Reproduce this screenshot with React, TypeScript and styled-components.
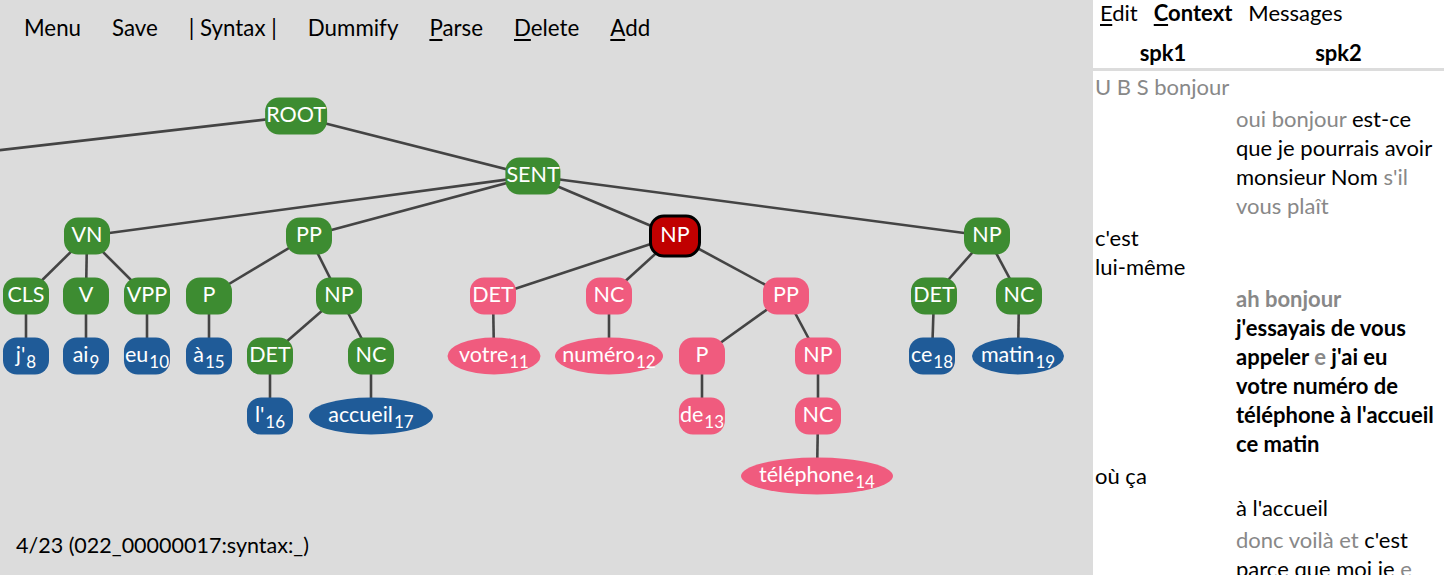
import React from "react";
import styled, { createGlobalStyle, css } from "styled-components";

const Global = createGlobalStyle`
  html, body { margin: 0; padding: 0; height: 100%; overflow: hidden; }
  body { font-family: Lato, "Open Sans", sans-serif; }
  #root { height: 100%; }
`;

const Page = styled.div`
  display: flex;
  width: 1444px;
  height: 575px;
  overflow: hidden;
`;

const Main = styled.div`
  width: 1093px;
  flex: none;
  display: flex;
  flex-direction: column;
  background: #dcdcdc;
  color: #000;
`;

const Toolbar = styled.div`
  height: 54px;
  padding: 0 0 2px 8.5px;
  display: flex;
  align-items: center;
  font-size: 22.3px;
  flex: none;
`;

const ToolItem = styled.span`
  padding: 0 15.5px;
  cursor: pointer;
  u { text-decoration: underline; text-underline-offset: 3px; }
`;

const Canvas = styled.div`
  position: relative;
  flex: 1;
  overflow: hidden;
`;

const Edges = styled.svg`
  position: absolute;
  left: 0;
  top: 0;
  width: 100%;
  height: 100%;
`;

type Kind = "green" | "blue" | "pink" | "red";

const colors: Record<Kind, string> = {
  green: "#3d8c31",
  blue: "#1f5b98",
  pink: "#f05b7e",
  red: "#c00000",
};

const NodeBox = styled.div<{ $kind: Kind; $w?: number }>`
  position: absolute;
  transform: translate(-50%, -50%);
  height: 37px;
  min-width: 46px;
  box-sizing: border-box;
  padding: 0 1px;
  display: flex;
  align-items: center;
  justify-content: center;
  white-space: nowrap;
  background: ${(p) => colors[p.$kind]};
  color: #fff;
  font-size: 21.5px;
  line-height: 1;
  border-radius: 14px;
  ${(p) =>
    p.$w &&
    css`
      border-radius: 50%;
      width: ${p.$w}px;
    `}
  ${(p) =>
    p.$kind === "red" &&
    css`
      box-sizing: content-box;
      border: 3px solid #000;
      padding: 0;
      width: 46px;
      border-radius: 15px;
    `}
`;

const Label = styled.span`
  position: relative;
  top: -2px;
`;

const Sub = styled.sub`
  font-size: 17px;
  vertical-align: -6px;
  line-height: 0;
  margin-left: 1px;
`;

const Status = styled.div`
  height: 60px;
  flex: none;
  display: flex;
  align-items: center;
  padding-left: 16px;
  font-size: 21.5px;
`;

const Side = styled.div`
  flex: 1;
  background: #fff;
  display: flex;
  flex-direction: column;
  font-size: 22px;
  overflow: hidden;
`;

const Tabs = styled.div`
  height: 25px;
  line-height: 25px;
  display: flex;
  gap: 16px;
  padding-left: 7px;
  flex: none;
`;

const Tab = styled.span<{ $active?: boolean }>`
  font-weight: ${(p) => (p.$active ? 700 : 400)};
  u { text-decoration: underline; text-underline-offset: 3px; }
`;

const SpeakerGrid = styled.div`
  display: grid;
  grid-template-columns: 140px 1fr;
`;

const HeaderRow = styled(SpeakerGrid)`
  padding-top: 13px;
  height: 30px;
  line-height: 29px;
  border-bottom: 3px solid #dcdcdc;
  font-weight: 700;
  text-align: center;
  flex: none;
`;

const Transcript = styled.div``;

const Utterance = styled(SpeakerGrid)`
  line-height: 29px;
  padding: 1px 0 2px;
`;

const Turn = styled.div<{ $col: number; $bold?: boolean }>`
  grid-column: ${(p) => p.$col};
  padding: ${(p) => (p.$col === 1 ? "0 0 0 2px" : "0 9.5px 0 3px")};
  font-weight: ${(p) => (p.$bold ? 700 : 400)};
`;

const Faint = styled.span`
  color: #888;
`;

const NoWrap = styled.span`
  white-space: nowrap;
`;

type N = {
  id: string;
  label: string;
  sub?: string;
  x: number;
  y: number;
  kind: Kind;
  w?: number;
  parent?: string;
};

const TOP = 56;
const L = (i: number) => 116 + i * 60 - TOP;

const nodes: N[] = [
  { id: "root", label: "ROOT", x: 296, y: L(0), kind: "green" },
  { id: "sent", label: "SENT", x: 533, y: L(1), kind: "green", parent: "root" },
  { id: "vn", label: "VN", x: 87, y: L(2), kind: "green", parent: "sent" },
  { id: "pp", label: "PP", x: 309, y: L(2), kind: "green", parent: "sent" },
  { id: "np1", label: "NP", x: 675, y: L(2), kind: "red", parent: "sent" },
  { id: "np2", label: "NP", x: 987, y: L(2), kind: "green", parent: "sent" },
  { id: "cls", label: "CLS", x: 26, y: L(3), kind: "green", parent: "vn" },
  { id: "v", label: "V", x: 86, y: L(3), kind: "green", parent: "vn" },
  { id: "vpp", label: "VPP", x: 147, y: L(3), kind: "green", parent: "vn" },
  { id: "w8", label: "j'", sub: "8", x: 26, y: L(4), kind: "blue", parent: "cls" },
  { id: "w9", label: "ai", sub: "9", x: 86, y: L(4), kind: "blue", parent: "v" },
  { id: "w10", label: "eu", sub: "10", x: 147, y: L(4), kind: "blue", parent: "vpp" },
  { id: "p1", label: "P", x: 209, y: L(3), kind: "green", parent: "pp" },
  { id: "np3", label: "NP", x: 339, y: L(3), kind: "green", parent: "pp" },
  { id: "w15", label: "à", sub: "15", x: 209, y: L(4), kind: "blue", parent: "p1" },
  { id: "det1", label: "DET", x: 270, y: L(4), kind: "green", parent: "np3" },
  { id: "nc1", label: "NC", x: 371, y: L(4), kind: "green", parent: "np3" },
  { id: "w16", label: "l'", sub: "16", x: 270, y: L(5), kind: "blue", parent: "det1" },
  { id: "w17", label: "accueil", sub: "17", x: 371, y: L(5), kind: "blue", w: 124, parent: "nc1" },
  { id: "det2", label: "DET", x: 493, y: L(3), kind: "pink", parent: "np1" },
  { id: "nc2", label: "NC", x: 609, y: L(3), kind: "pink", parent: "np1" },
  { id: "pp2", label: "PP", x: 786, y: L(3), kind: "pink", parent: "np1" },
  { id: "w11", label: "votre", sub: "11", x: 494, y: L(4), kind: "pink", w: 93, parent: "det2" },
  { id: "w12", label: "numéro", sub: "12", x: 609, y: L(4), kind: "pink", w: 108, parent: "nc2" },
  { id: "p2", label: "P", x: 702, y: L(4), kind: "pink", parent: "pp2" },
  { id: "np4", label: "NP", x: 818, y: L(4), kind: "pink", parent: "pp2" },
  { id: "w13", label: "de", sub: "13", x: 702, y: L(5), kind: "pink", parent: "p2" },
  { id: "nc3", label: "NC", x: 818, y: L(5), kind: "pink", parent: "np4" },
  { id: "w14", label: "téléphone", sub: "14", x: 817, y: L(6), kind: "pink", w: 152, parent: "nc3" },
  { id: "det3", label: "DET", x: 934, y: L(3), kind: "green", parent: "np2" },
  { id: "nc4", label: "NC", x: 1019, y: L(3), kind: "green", parent: "np2" },
  { id: "w18", label: "ce", sub: "18", x: 932, y: L(4), kind: "blue", parent: "det3" },
  { id: "w19", label: "matin", sub: "19", x: 1018, y: L(4), kind: "blue", w: 92, parent: "nc4" },
];

const byId = Object.fromEntries(nodes.map((n) => [n.id, n]));

const toolItems: { key?: string; rest: string; pre?: string }[] = [
  { pre: "Menu", rest: "" },
  { pre: "Save", rest: "" },
  { pre: "| Syntax |", rest: "" },
  { pre: "Dummify", rest: "" },
  { key: "P", rest: "arse" },
  { key: "D", rest: "elete" },
  { key: "A", rest: "dd" },
];

export default function App() {
  return (
    <Page>
      <Global />
      <Main>
        <Toolbar>
          {toolItems.map((t, i) => (
            <ToolItem key={i}>
              {t.pre}
              {t.key && <u>{t.key}</u>}
              {t.rest}
            </ToolItem>
          ))}
        </Toolbar>
        <Canvas>
          <Edges>
            <line x1={296} y1={L(0)} x2={-224} y2={L(1)} stroke="#444" strokeWidth={2.6} />
            {nodes
              .filter((n) => n.parent)
              .map((n) => {
                const p = byId[n.parent!];
                return (
                  <line key={n.id} x1={p.x} y1={p.y} x2={n.x} y2={n.y} stroke="#444" strokeWidth={2.6} />
                );
              })}
          </Edges>
          {nodes.map((n) => (
            <NodeBox key={n.id} $kind={n.kind} $w={n.w} style={{ left: n.x, top: n.y }}>
              <Label>
                {n.label}
                {n.sub && <Sub>{n.sub}</Sub>}
              </Label>
            </NodeBox>
          ))}
        </Canvas>
        <Status>4/23 (022_00000017:syntax:_)</Status>
      </Main>
      <Side>
        <Tabs>
          <Tab>
            <u>E</u>dit
          </Tab>
          <Tab $active>
            <u>C</u>ontext
          </Tab>
          <Tab>Messages</Tab>
        </Tabs>
        <HeaderRow>
          <div>spk1</div>
          <div>spk2</div>
        </HeaderRow>
        <Transcript>
          <Utterance>
            <Turn $col={1}>
              <Faint>U B S bonjour</Faint>
            </Turn>
          </Utterance>
          <Utterance>
            <Turn $col={2}>
              <Faint>oui bonjour</Faint> est-ce que je pourrais avoir monsieur Nom{" "}
              <Faint>s'il vous plaît</Faint>
            </Turn>
          </Utterance>
          <Utterance>
            <Turn $col={1}>
              c'est <NoWrap>lui-même</NoWrap>
            </Turn>
          </Utterance>
          <Utterance>
            <Turn $col={2} $bold>
              <Faint>ah bonjour</Faint> j'essayais de vous appeler <Faint>e</Faint> j'ai eu votre
              numéro de téléphone à l'accueil ce matin
            </Turn>
          </Utterance>
          <Utterance>
            <Turn $col={1}>où ça</Turn>
          </Utterance>
          <Utterance>
            <Turn $col={2}>à l'accueil</Turn>
          </Utterance>
          <Utterance>
            <Turn $col={2}>
              <Faint>donc voilà et</Faint> c'est parce que moi je <Faint>e</Faint> j'étais pas
              là ce matin
            </Turn>
          </Utterance>
        </Transcript>
      </Side>
    </Page>
  );
}
